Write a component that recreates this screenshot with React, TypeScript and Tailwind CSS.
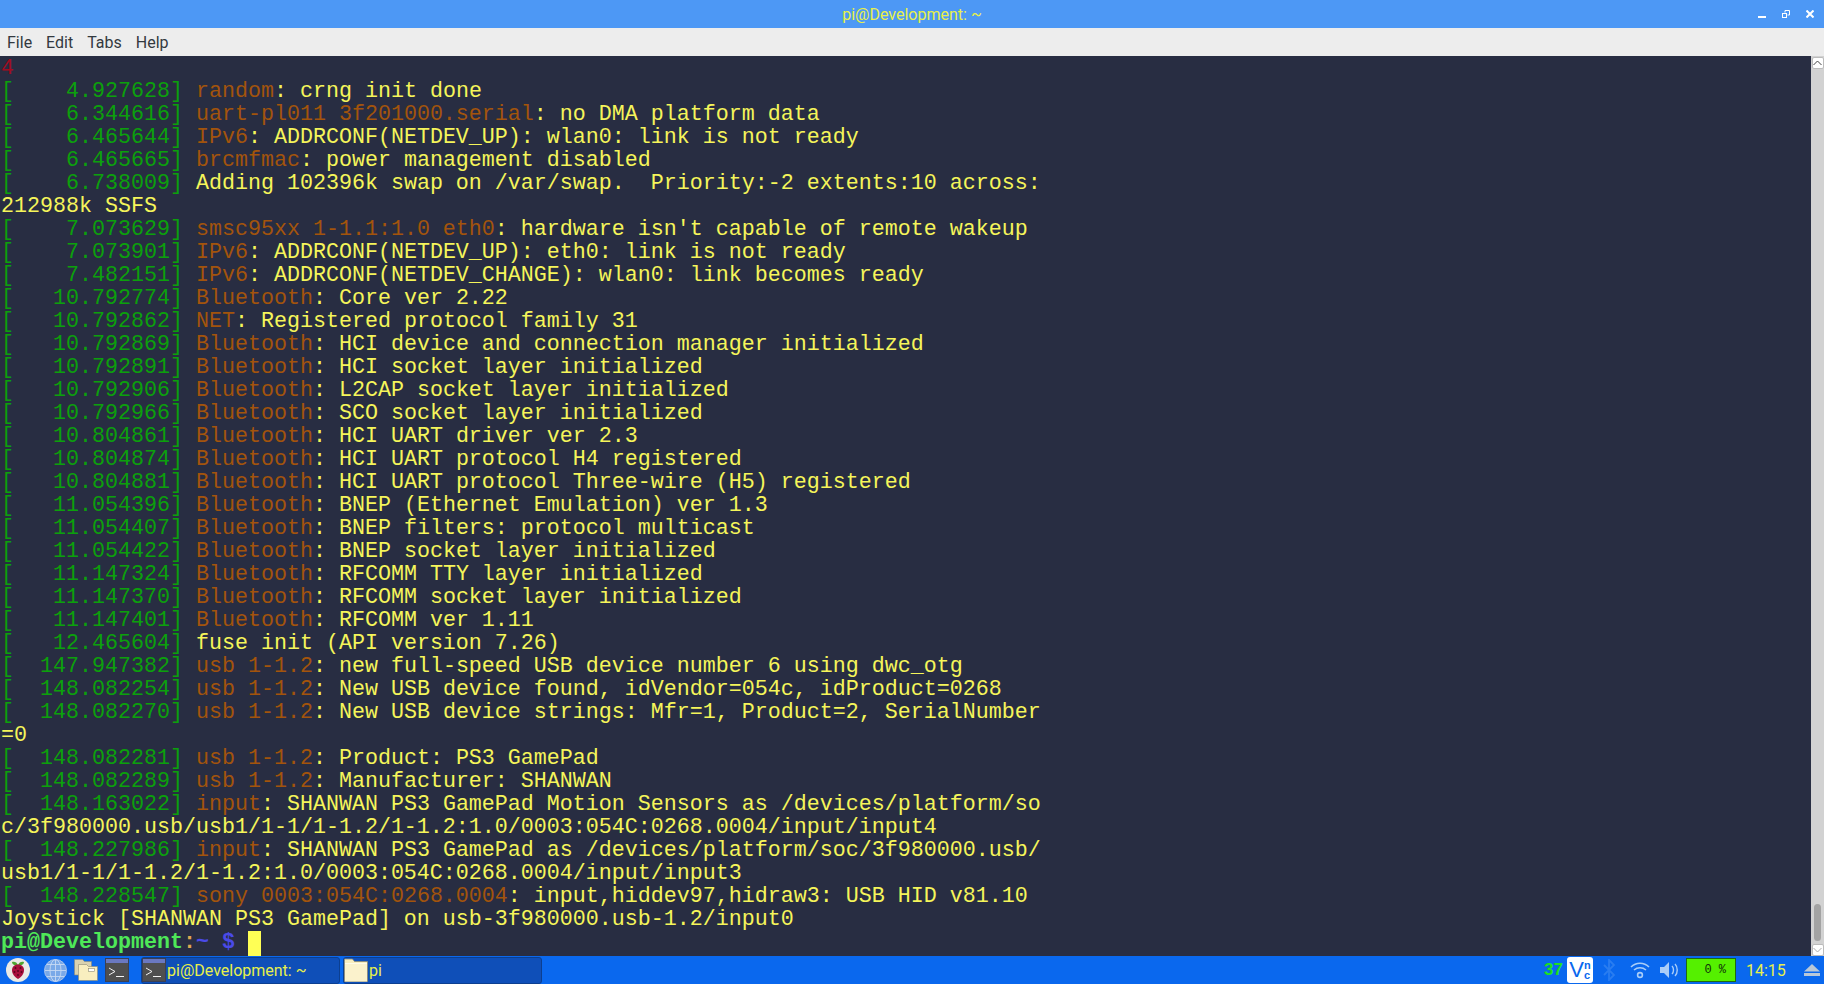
import React from "react";

const G = "text-[#0ca00c]";
const B = "text-[#a3540c]";

type Line = { t?: string; s?: string; r: string };

const lines: Line[] = [
  { t: "[    4.927628]", s: "random", r: ": crng init done" },
  { t: "[    6.344616]", s: "uart-pl011 3f201000.serial", r: ": no DMA platform data" },
  { t: "[    6.465644]", s: "IPv6", r: ": ADDRCONF(NETDEV_UP): wlan0: link is not ready" },
  { t: "[    6.465665]", s: "brcmfmac", r: ": power management disabled" },
  { t: "[    6.738009]", r: "Adding 102396k swap on /var/swap.  Priority:-2 extents:10 across:" },
  { r: "212988k SSFS" },
  { t: "[    7.073629]", s: "smsc95xx 1-1.1:1.0 eth0", r: ": hardware isn't capable of remote wakeup" },
  { t: "[    7.073901]", s: "IPv6", r: ": ADDRCONF(NETDEV_UP): eth0: link is not ready" },
  { t: "[    7.482151]", s: "IPv6", r: ": ADDRCONF(NETDEV_CHANGE): wlan0: link becomes ready" },
  { t: "[   10.792774]", s: "Bluetooth", r: ": Core ver 2.22" },
  { t: "[   10.792862]", s: "NET", r: ": Registered protocol family 31" },
  { t: "[   10.792869]", s: "Bluetooth", r: ": HCI device and connection manager initialized" },
  { t: "[   10.792891]", s: "Bluetooth", r: ": HCI socket layer initialized" },
  { t: "[   10.792906]", s: "Bluetooth", r: ": L2CAP socket layer initialized" },
  { t: "[   10.792966]", s: "Bluetooth", r: ": SCO socket layer initialized" },
  { t: "[   10.804861]", s: "Bluetooth", r: ": HCI UART driver ver 2.3" },
  { t: "[   10.804874]", s: "Bluetooth", r: ": HCI UART protocol H4 registered" },
  { t: "[   10.804881]", s: "Bluetooth", r: ": HCI UART protocol Three-wire (H5) registered" },
  { t: "[   11.054396]", s: "Bluetooth", r: ": BNEP (Ethernet Emulation) ver 1.3" },
  { t: "[   11.054407]", s: "Bluetooth", r: ": BNEP filters: protocol multicast" },
  { t: "[   11.054422]", s: "Bluetooth", r: ": BNEP socket layer initialized" },
  { t: "[   11.147324]", s: "Bluetooth", r: ": RFCOMM TTY layer initialized" },
  { t: "[   11.147370]", s: "Bluetooth", r: ": RFCOMM socket layer initialized" },
  { t: "[   11.147401]", s: "Bluetooth", r: ": RFCOMM ver 1.11" },
  { t: "[   12.465604]", r: "fuse init (API version 7.26)" },
  { t: "[  147.947382]", s: "usb 1-1.2", r: ": new full-speed USB device number 6 using dwc_otg" },
  { t: "[  148.082254]", s: "usb 1-1.2", r: ": New USB device found, idVendor=054c, idProduct=0268" },
  { t: "[  148.082270]", s: "usb 1-1.2", r: ": New USB device strings: Mfr=1, Product=2, SerialNumber" },
  { r: "=0" },
  { t: "[  148.082281]", s: "usb 1-1.2", r: ": Product: PS3 GamePad" },
  { t: "[  148.082289]", s: "usb 1-1.2", r: ": Manufacturer: SHANWAN" },
  { t: "[  148.163022]", s: "input", r: ": SHANWAN PS3 GamePad Motion Sensors as /devices/platform/so" },
  { r: "c/3f980000.usb/usb1/1-1/1-1.2/1-1.2:1.0/0003:054C:0268.0004/input/input4" },
  { t: "[  148.227986]", s: "input", r: ": SHANWAN PS3 GamePad as /devices/platform/soc/3f980000.usb/" },
  { r: "usb1/1-1/1-1.2/1-1.2:1.0/0003:054C:0268.0004/input/input3" },
  { t: "[  148.228547]", s: "sony 0003:054C:0268.0004", r: ": input,hiddev97,hidraw3: USB HID v81.10" },
  { r: "Joystick [SHANWAN PS3 GamePad] on usb-3f980000.usb-1.2/input0" },
];

const TermIcon = () => (
  <svg width="24" height="24" viewBox="0 0 24 24" className="shrink-0">
    <rect x="0.5" y="0.5" width="23" height="23" fill="#4f4f4f" stroke="#3a3f55" />
    <rect x="1" y="1" width="22" height="4" fill="#6a78c0" />
    <path d="M4 10l6 3.500-6 3.500" fill="none" stroke="#f2f2f2" strokeWidth="1" />
    <path d="M11 18.500h8" stroke="#f2f2f2" strokeWidth="1" />
  </svg>
);

const FolderIcon = () => (
  <svg width="24" height="24" viewBox="0 0 24 24" className="shrink-0">
    <path d="M0.500 3.500V1h8l2 2.500h13v20H0.500z" fill="#f8eebf" stroke="#8d8a74" strokeWidth="0.8" />
    <path d="M1 5.500h22v18H1z" fill="#fbf2cc" />
    <path d="M1 5.500h22" stroke="#fffbe8" />
  </svg>
);

const FilesIcon = () => (
  <svg width="24" height="24" viewBox="0 0 24 24" className="shrink-0">
    <path d="M0.500 17V1.500h8l2 2h7V17z" fill="#d9d2b0" stroke="#8d8a74" strokeWidth="0.6" />
    <path d="M4.500 22.500V6.500h8l2 2h9v14z" fill="#f8eebf" stroke="#8d8a74" strokeWidth="0.6" />
    <rect x="14.500" y="10.500" width="6" height="3" fill="#fff" stroke="#8d8a74" strokeWidth="0.6" />
  </svg>
);

const RaspberryIcon = () => (
  <svg width="24" height="24" viewBox="0 0 24 24" className="shrink-0">
    <circle cx="12" cy="12" r="12" fill="#e9e9e4" />
    <path d="M12 7c-1-3-4-4-6-3 0 2 2 4 6 3zM12 7c1-3 4-4 6-3 0 2-2 4-6 3z" fill="#4da52f" />
    <path d="M12 6.500c4 0 6 2.500 6 5.500 0 4-3 7.500-6 9-3-1.500-6-5-6-9 0-3 2-5.500 6-5.500z" fill="#a80f3c" />
    <g fill="#5c0520">
      <circle cx="9.500" cy="10" r="1" />
      <circle cx="14.500" cy="10" r="1" />
      <circle cx="12" cy="13" r="1" />
      <circle cx="8.500" cy="14" r="1" />
      <circle cx="15.500" cy="14" r="1" />
      <circle cx="12" cy="17" r="1" />
    </g>
  </svg>
);

const GlobeIcon = () => (
  <svg width="23" height="23" viewBox="0 0 23 23" className="shrink-0">
    <circle cx="11.500" cy="11.500" r="11" fill="#7aa9e8" stroke="#a9c3ea" />
    <g fill="none" stroke="#c6d9f3" strokeWidth="0.9">
      <path d="M11.500 1v21M1 11.500h21M3 5.500h17M3 17.500h17" />
      <ellipse cx="11.500" cy="11.500" rx="5.500" ry="11" />
    </g>
  </svg>
);

export default function App() {
  return (
    <div className="w-[1824px] h-[984px] flex flex-col overflow-hidden font-['Roboto',sans-serif]">
      {/* title bar */}
      <div className="h-[28px] shrink-0 bg-[#4d98f5] flex items-center relative pt-[1px]">
        <div className="flex-1 text-center text-[#e8f04a] text-[16px]">pi@Development: ~</div>
        <div className="absolute left-[1758px] top-[10px] flex items-start gap-[16px]">
          <svg width="8" height="8" viewBox="0 0 8 8"><rect x="0" y="6" width="8" height="2" fill="#fff" /></svg>
          <svg width="8" height="8" viewBox="0 0 8 8" fill="none" stroke="#fff"><rect x="0.500" y="3.500" width="4" height="4" /><path d="M3 2.500V0.500h4.500v4.500H5.500" /></svg>
          <svg width="8" height="8" viewBox="0 0 8 8" stroke="#fff" strokeWidth="2"><path d="M0.500 0.500l7 7M7.500 0.500l-7 7" /></svg>
        </div>
      </div>
      {/* menu bar */}
      <div className="h-[28px] shrink-0 bg-[#ededed] flex items-center pl-[7px] pt-[1px] gap-[14px] text-[16px] text-[#33393f]">
        <span>File</span>
        <span>Edit</span>
        <span>Tabs</span>
        <span>Help</span>
      </div>
      {/* terminal */}
      <div className="flex-1 flex min-h-0">
        <div className="flex-1 bg-[#282d42] font-['Liberation_Mono',monospace] text-[21.67px] leading-[23px] whitespace-pre text-[#f5f55a] pl-[1px] pt-[1px] overflow-hidden">
          <div className="text-[#a00c20] h-[23px]">4</div>
          {lines.map((l, i) => (
            <div key={i} className="h-[23px]">
              {l.t && <span className={G}>{l.t} </span>}
              {l.s && <span className={B}>{l.s}</span>}
              {l.r}
            </div>
          ))}
          <div className="h-[23px] font-bold flex">
            <span className="text-[#4ee858]">pi@Development</span>
            <span className="text-[#e0a850]">:</span>
            <span className="text-[#4a4ae8]">~ $ </span>
            <span className="w-[13px] h-[25px] bg-[#ffff55] shrink-0" />
          </div>
        </div>
        <div className="w-[13px] shrink-0 bg-[#d2d2d2] flex flex-col justify-between items-center pt-[1px]">
          <div className="w-[12px] h-[12px] bg-white border border-[#bbb] rounded-[2px] flex items-center justify-center">
            <svg width="9" height="6" viewBox="0 0 9 6" fill="none" stroke="#444"><path d="M0.500 5l4-4 4 4" /></svg>
          </div>
          <div className="flex flex-col items-center">
            <div className="w-[7px] h-[37px] bg-[#a3a3a3] rounded-[4px] mb-[3px]" />
            <div className="w-[12px] h-[12px] bg-white border border-[#bbb] rounded-[2px] flex items-center justify-center">
              <svg width="9" height="6" viewBox="0 0 9 6" fill="none" stroke="#aaa"><path d="M0.500 1l4 4 4-4" /></svg>
            </div>
          </div>
        </div>
      </div>
      {/* panel */}
      <div className="h-[28px] shrink-0 bg-[#0a68ee] flex items-center text-[16px] text-[#e8f04a]">
        <div className="ml-[6px]"><RaspberryIcon /></div>
        <div className="ml-[14px]"><GlobeIcon /></div>
        <div className="ml-[7px]"><FilesIcon /></div>
        <div className="ml-[7px]"><TermIcon /></div>
        <div className="ml-[12px] w-[199px] h-[27px] bg-[#0f4fb8] border border-[#0c3f90] rounded-[3px] flex items-center gap-[1px]">
          <TermIcon />
          <span className="pt-[1px]">pi@Development: ~</span>
        </div>
        <div className="ml-[3px] w-[199px] h-[27px] bg-[#0f4fb8] border border-[#0c3f90] rounded-[3px] flex items-center gap-[1px]">
          <FolderIcon />
          <span className="pt-[1px]">pi</span>
        </div>
        <div className="flex-1" />
        <span className="text-[#1fe01f] font-bold text-[17px] font-['Liberation_Sans',sans-serif]">37</span>
        <div className="ml-[4px] w-[26px] h-[26px] bg-white rounded-[3px] flex items-center justify-center text-[#0a68ee] font-['Liberation_Sans',sans-serif] leading-none">
          <span className="text-[22px]">V</span>
          <span className="flex flex-col text-[11px] leading-[10px] font-bold">
            <span>n</span>
            <span>c</span>
          </span>
        </div>
        <svg className="ml-[10px]" width="12" height="22" viewBox="0 0 12 22" fill="none" stroke="#2a7df0" strokeWidth="1.800">
          <path d="M1 6l10 10-5 5V1l5 5-10 10" />
        </svg>
        <svg className="ml-[15px]" width="20" height="20" viewBox="0 0 20 20" fill="none" stroke="#a9cdf8" strokeWidth="1.600">
          <path d="M1 7c5-5 13-5 18 0M4 10c3.500-3 8.500-3 12 0" />
          <circle cx="10" cy="15" r="2.400" />
        </svg>
        <svg className="ml-[10px]" width="20" height="20" viewBox="0 0 20 20">
          <path d="M0 7h4l5-5v16l-5-5H0z" fill="#a9cdf8" />
          <path d="M12 6c2 2 2 6 0 8M15 4c3 3 3 9 0 12" fill="none" stroke="#a9cdf8" strokeWidth="1.400" />
        </svg>
        <div className="ml-[6px] w-[50px] h-[24px] bg-[#55f000] border border-[#1f6a10] flex items-center justify-end pr-[9px] text-[#10300a] text-[12px] font-['Liberation_Mono',monospace] whitespace-pre">0 %</div>
        <span className="ml-[10px] w-[39px] text-[16px] whitespace-nowrap pt-[1px]">14:15</span>
        <svg className="ml-[19px] mr-[4px]" width="16" height="12" viewBox="0 0 16 12" fill="#b8c8d8">
          <path d="M8 0l8 7.500H0z" />
          <rect x="0" y="9" width="16" height="3" />
        </svg>
      </div>
    </div>
  );
}
